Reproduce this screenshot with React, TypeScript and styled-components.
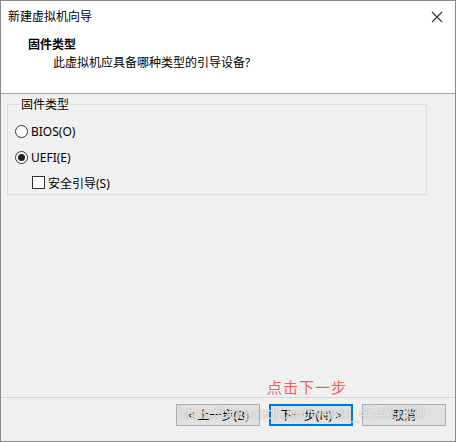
import { createGlobalStyle } from "styled-components";
import styled from "styled-components";

const GlobalStyle = createGlobalStyle`
  html, body {
    margin: 0;
    padding: 0;
    background: #ffffff;
  }
  body {
    font-family: "Noto Sans", "Noto Sans CJK SC", sans-serif;
    font-size: 12px;
    color: #000;
  }
`;

const FONT = `"Noto Sans", "Noto Sans CJK SC", sans-serif`;

const Window = styled.div`
  position: relative;
  box-sizing: border-box;
  width: 456px;
  height: 442px;
  border: 1px solid #8a8a8a;
  display: flex;
  flex-direction: column;
  background: #f0f0f0;
  overflow: hidden;
`;

const TitleBar = styled.div`
  height: 29px;
  display: flex;
  align-items: center;
  justify-content: space-between;
  padding: 0 12px 0 7px;
  background: #fff;
  font-size: 12px;
`;

const CloseIcon = styled.svg`
  width: 12px;
  height: 12px;
  margin-top: 2px;
`;

const Header = styled.div`
  height: 57px;
  background: #fff;
  border-bottom: 1px solid #a0a0a0;
  display: flex;
  flex-direction: column;
  padding: 6px 0 0 27px;
`;

const HeaderTitle = styled.div`
  font-weight: bold;
  font-size: 12px;
  line-height: 18px;
`;

const HeaderSub = styled.div`
  font-size: 12px;
  line-height: 18px;
  padding-left: 25px;
`;

const Body = styled.div`
  flex: 1;
  display: flex;
  flex-direction: column;
  padding: 1px 28px 0 6px;
`;

const Group = styled.fieldset`
  margin: 0;
  padding: 9px 0 1px 7px;
  border: 1px solid #dcdcdc;
  display: flex;
  flex-direction: column;
  gap: 6px;
`;

const Legend = styled.legend`
  padding: 0 2px;
  margin-left: 4px;
  font-size: 12px;
  color: #000;
`;

const Option = styled.label<{ $indent?: boolean }>`
  display: flex;
  align-items: center;
  gap: 3px;
  height: 19.5px;
  padding-left: ${({ $indent }) => ($indent ? "17px" : "0")};
  font-size: 12px;
`;

const Radio = styled.span<{ $checked?: boolean }>`
  box-sizing: border-box;
  width: 13px;
  height: 13px;
  border-radius: 50%;
  border: 1px solid #333;
  background: #fff;
  display: flex;
  align-items: center;
  justify-content: center;
  &::after {
    content: "";
    width: 7px;
    height: 7px;
    border-radius: 50%;
    background: ${({ $checked }) => ($checked ? "#222" : "transparent")};
  }
`;

const Checkbox = styled.span`
  box-sizing: border-box;
  width: 13px;
  height: 13px;
  border: 1px solid #333;
  background: #fff;
`;

const Spacer = styled.div`
  flex: 1;
`;

const Annotation = styled.div`
  align-self: flex-start;
  margin-left: 266px;
  margin-bottom: 0;
  color: #f65b5b;
  font-size: 15px;
  letter-spacing: 1px;
  line-height: 19px;
`;

const Footer = styled.div`
  position: relative;
  height: 37px;
  border-top: 1px solid #d5d5d5;
  display: flex;
  justify-content: flex-end;
  align-items: flex-start;
  padding: 6px 9px 0 0;
  gap: 9px;
`;

const Button = styled.button<{ $primary?: boolean }>`
  box-sizing: border-box;
  width: 84px;
  height: 22px;
  margin: 0;
  padding: 0;
  font-family: ${FONT};
  font-size: 12px;
  white-space: nowrap;
  color: #000;
  background: #e1e1e1;
  border: ${({ $primary }) => ($primary ? "2px solid #0078d7" : "1px solid #adadad")};
`;

const Watermark = styled.div`
  position: absolute;
  left: 177px;
  top: 7px;
  font-family: "Liberation Sans", sans-serif;
  font-size: 16px;
  letter-spacing: -0.7px;
  color: rgba(250, 250, 250, 0.8);
  text-shadow: 0 0 1px rgba(110, 110, 110, 0.7);
  pointer-events: none;
  white-space: nowrap;
`;

export default function App() {
  return (
    <>
      <GlobalStyle />
      <Window>
        <TitleBar>
          <span>新建虚拟机向导</span>
          <CloseIcon viewBox="0 0 12 12">
            <path d="M1 1 L11 11 M11 1 L1 11" stroke="#333" strokeWidth="1.1" fill="none" />
          </CloseIcon>
        </TitleBar>
        <Header>
          <HeaderTitle>固件类型</HeaderTitle>
          <HeaderSub>此虚拟机应具备哪种类型的引导设备?</HeaderSub>
        </Header>
        <Body>
          <Group>
            <Legend>固件类型</Legend>
            <Option>
              <Radio />
              BIOS(O)
            </Option>
            <Option>
              <Radio $checked />
              UEFI(E)
            </Option>
            <Option $indent>
              <Checkbox />
              安全引导(S)
            </Option>
          </Group>
          <Spacer />
        </Body>
        <Annotation>点击下一步</Annotation>
        <Footer>
          <Button>&lt; 上一步(B)</Button>
          <Button $primary>下一步(N) &gt;</Button>
          <Button>取消</Button>
          <Watermark>https://blog.csdn.net/weixin_45409350</Watermark>
        </Footer>
      </Window>
    </>
  );
}
